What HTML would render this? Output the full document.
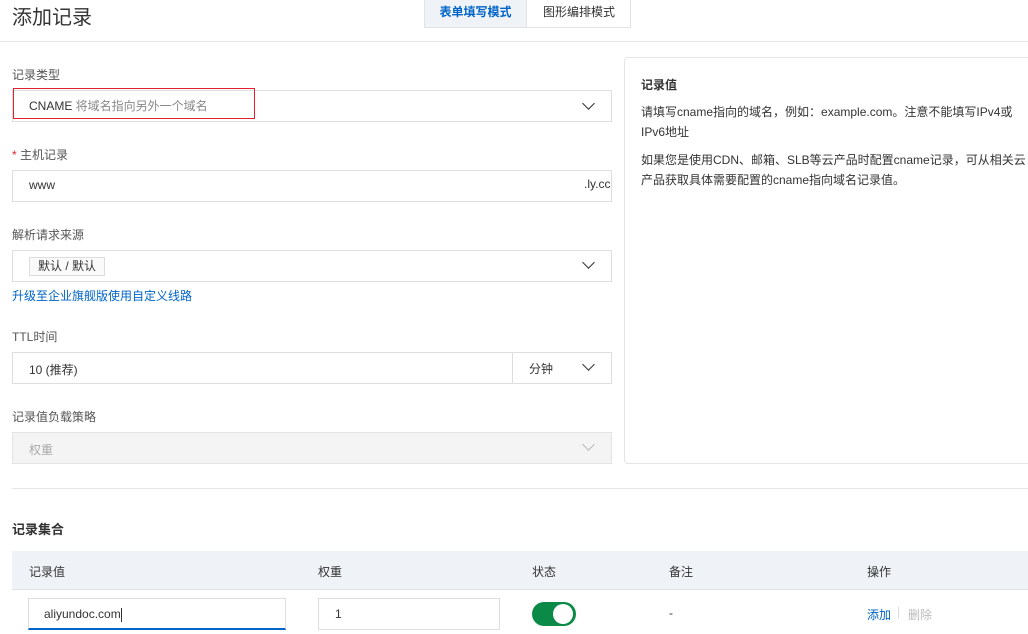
<!DOCTYPE html>
<html><head><meta charset="utf-8"><style>
*{box-sizing:border-box;margin:0;padding:0}
body{width:1028px;height:634px;overflow:hidden;background:#fff;font-family:"Liberation Sans","Noto Sans CJK SC",sans-serif;color:#333;font-size:12px;position:relative}
.a{position:absolute}
.box{position:absolute;border:1px solid #dedede;background:#fff}
.lbl{position:absolute;left:12px;font-size:12px;color:#555}
.chev{position:absolute;width:9px;height:9px;border-right:1.5px solid #333;border-bottom:1.5px solid #333;transform:rotate(45deg)}
</style></head><body>
<div class="a" style="left:12px;top:1px;font-size:20px;color:#333">添加记录</div>
<div class="a" style="left:424px;top:-1px;width:207px;height:29px;border:1px solid #e3e3e3;"></div>
<div class="a" style="left:425px;top:0;width:101px;height:27px;background:#eff3f8;color:#0064c8;font-weight:bold;text-align:center;line-height:25px">表单填写模式</div>
<div class="a" style="left:526px;top:0;width:105px;height:27px;border-left:1px solid #e3e3e3;text-align:center;line-height:25px;color:#333">图形编排模式</div>
<div class="a" style="left:0;top:41px;width:1028px;height:1px;background:#e5e5e5"></div>

<div class="lbl" style="top:66px">记录类型</div>
<div class="box" style="left:12px;top:90px;width:600px;height:32px"></div>
<div class="a" style="left:13px;top:88px;width:242px;height:31px;border:1.5px solid #e0212b"></div>
<div class="a" style="left:29px;top:97px;color:#333">CNAME <span style="color:#888">将域名指向另外一个域名</span></div>
<div class="chev" style="left:584px;top:99px"></div>

<div class="lbl" style="top:146px"><span style="color:#e0212b">*</span> 主机记录</div>
<div class="box" style="left:12px;top:170px;width:600px;height:32px"></div>
<div class="a" style="left:29px;top:178px">www</div>
<div class="a" style="left:584px;top:177px">.ly.cc</div>

<div class="lbl" style="top:226px">解析请求来源</div>
<div class="box" style="left:12px;top:250px;width:600px;height:32px"></div>
<div class="a" style="left:29px;top:257px;width:76px;height:19px;border:1px solid #ddd;background:#fafafa;text-align:center;line-height:17px">默认 / 默认</div>
<div class="chev" style="left:584px;top:258px"></div>
<div class="a" style="left:12px;top:287px;color:#0064c8">升级至企业旗舰版使用自定义线路</div>

<div class="lbl" style="top:328px">TTL时间</div>
<div class="box" style="left:12px;top:352px;width:600px;height:32px"></div>
<div class="a" style="left:512px;top:352px;width:1px;height:32px;background:#dedede"></div>
<div class="a" style="left:29px;top:361px">10 (推荐)</div>
<div class="a" style="left:529px;top:360px">分钟</div>
<div class="chev" style="left:584px;top:360px"></div>

<div class="lbl" style="top:408px">记录值负载策略</div>
<div class="box" style="left:12px;top:432px;width:600px;height:32px;background:#f4f4f4;border-color:#e3e3e3"></div>
<div class="a" style="left:29px;top:441px;color:#aaa">权重</div>
<div class="chev" style="left:584px;top:440px;border-color:#bbb"></div>

<div class="a" style="left:624px;top:57px;width:420px;height:407px;border:1px solid #e5e5e5;border-radius:4px"></div>
<div class="a" style="left:641px;top:76px;font-weight:bold;color:#333">记录值</div>
<div class="a" style="left:641px;top:102px;width:386px;line-height:20px;color:#333">请填写cname指向的域名，例如：example.com。注意不能填写IPv4或IPv6地址</div>
<div class="a" style="left:641px;top:150px;width:386px;line-height:20px;color:#333">如果您是使用CDN、邮箱、SLB等云产品时配置cname记录，可从相关云产品获取具体需要配置的cname指向域名记录值。</div>

<div class="a" style="left:12px;top:488px;width:1016px;height:1px;background:#e5e5e5"></div>
<div class="a" style="left:12px;top:519px;font-size:13px;font-weight:bold;color:#333">记录集合</div>

<div class="a" style="left:12px;top:551px;width:1016px;height:39px;background:#eff2f6;border-bottom:1px solid #e3e3e3"></div>
<div class="a" style="left:29px;top:563px">记录值</div>
<div class="a" style="left:318px;top:563px">权重</div>
<div class="a" style="left:532px;top:563px">状态</div>
<div class="a" style="left:669px;top:563px">备注</div>
<div class="a" style="left:867px;top:563px">操作</div>

<div class="a" style="left:28px;top:598px;width:258px;height:32px;border:1px solid #dedede;border-bottom:2px solid #0064c8"></div>
<div class="a" style="left:44px;top:607px">aliyundoc.com<span style="display:inline-block;width:1px;height:14px;background:#333;vertical-align:middle"></span></div>
<div class="box" style="left:318px;top:598px;width:182px;height:32px"></div>
<div class="a" style="left:335px;top:607px">1</div>
<div class="a" style="left:532px;top:602px;width:44px;height:24px;border-radius:12px;background:#0a8a46"></div>
<div class="a" style="left:553px;top:604px;width:20px;height:20px;border-radius:10px;background:#fff"></div>
<div class="a" style="left:669px;top:606px">-</div>
<div class="a" style="left:867px;top:606px;color:#0064c8">添加</div>
<div class="a" style="left:898px;top:607px;width:1px;height:12px;background:#ddd"></div>
<div class="a" style="left:908px;top:606px;color:#bbb">删除</div>
</body></html>
